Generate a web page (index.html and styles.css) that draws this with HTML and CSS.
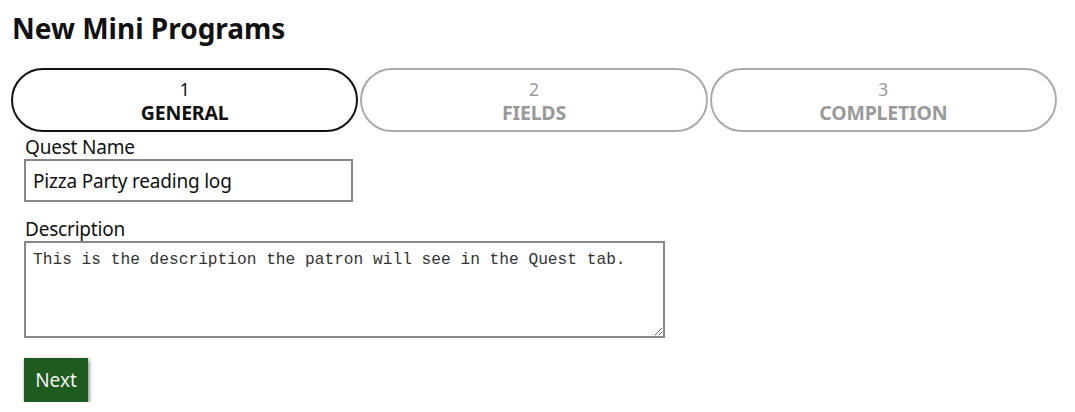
FILE: index.html
```html
<!DOCTYPE html>
<html>
<head>
<meta charset="utf-8">
<link rel="stylesheet" href="styles.css">
</head>
<body>
<div class="page">
  <h1 class="title">New Mini Programs</h1>
  <div class="steps">
    <div class="step active"><span class="num">1</span><span class="label">GENERAL</span></div>
    <div class="step"><span class="num">2</span><span class="label">FIELDS</span></div>
    <div class="step"><span class="num">3</span><span class="label">COMPLETION</span></div>
  </div>
  <form class="form">
    <label class="field">
      <span class="field-label">Quest Name</span>
      <input class="text-input" type="text" value="Pizza Party reading log">
    </label>
    <label class="field">
      <span class="field-label">Description</span>
      <textarea class="textarea">This is the description the patron will see in the Quest tab.</textarea>
    </label>
    <div class="actions">
      <button type="button" class="btn-next">Next</button>
    </div>
  </form>
</div>
</body>
</html>
```
FILE: styles.css
```css
html, body {
  margin: 0;
  padding: 0;
  background: #fff;
}
.page {
  padding: 12px 18px 0 11px;
  font-family: "Noto Sans", "Open Sans", sans-serif;
  color: #111;
}
.title {
  margin: 0 0 0 1px;
  font-size: 28px;
  font-weight: 700;
  line-height: 32px;
}
.steps {
  display: flex;
  gap: 2px;
  margin-top: 24px;
}
.step {
  flex: 1;
  height: 64px;
  box-sizing: border-box;
  border: 2px solid #aaa;
  border-radius: 32px;
  display: flex;
  flex-direction: column;
  align-items: center;
  justify-content: center;
  color: #999;
  font-size: 17.5px;
  line-height: 23px;
}
.step.active {
  border-color: #111;
  color: #111;
}
.step .num {
  padding-top: 2px;
}
.step .label {
  font-weight: 700;
  font-size: 19.5px;
  letter-spacing: -0.2px;
}
.form {
  padding-left: 13px;
  padding-top: 1px;
  display: flex;
  flex-direction: column;
}
.field {
  display: flex;
  flex-direction: column;
  align-items: flex-start;
  margin-bottom: 13px;
}
.field-label {
  font-size: 19px;
  line-height: 24px;
  margin-left: 1px;
  margin-top: 2px;
  letter-spacing: -0.2px;
}
.text-input {
  width: 329px;
  height: 43px;
  box-sizing: border-box;
  border: 2px solid #888;
  padding: 0 7px;
  font-family: "Noto Sans", "Open Sans", sans-serif;
  font-size: 19px;
  letter-spacing: -0.2px;
  color: #111;
  outline: none;
}
.textarea {
  width: 641px;
  height: 97px;
  box-sizing: border-box;
  border: 2px solid #888;
  padding: 8px 7px;
  font-family: "Liberation Mono", monospace;
  font-size: 16.2px;
  color: #333;
  resize: both;
  outline: none;
}
.actions {
  margin-top: 7px;
}
.btn-next {
  width: 64px;
  height: 44px;
  border: none;
  background: #1f5a1f;
  color: #f4f4f4;
  font-family: "Noto Sans", "Open Sans", sans-serif;
  font-size: 19px;
  box-shadow: 1px 2px 4px rgba(0,0,0,0.55);
  cursor: pointer;
}
```
